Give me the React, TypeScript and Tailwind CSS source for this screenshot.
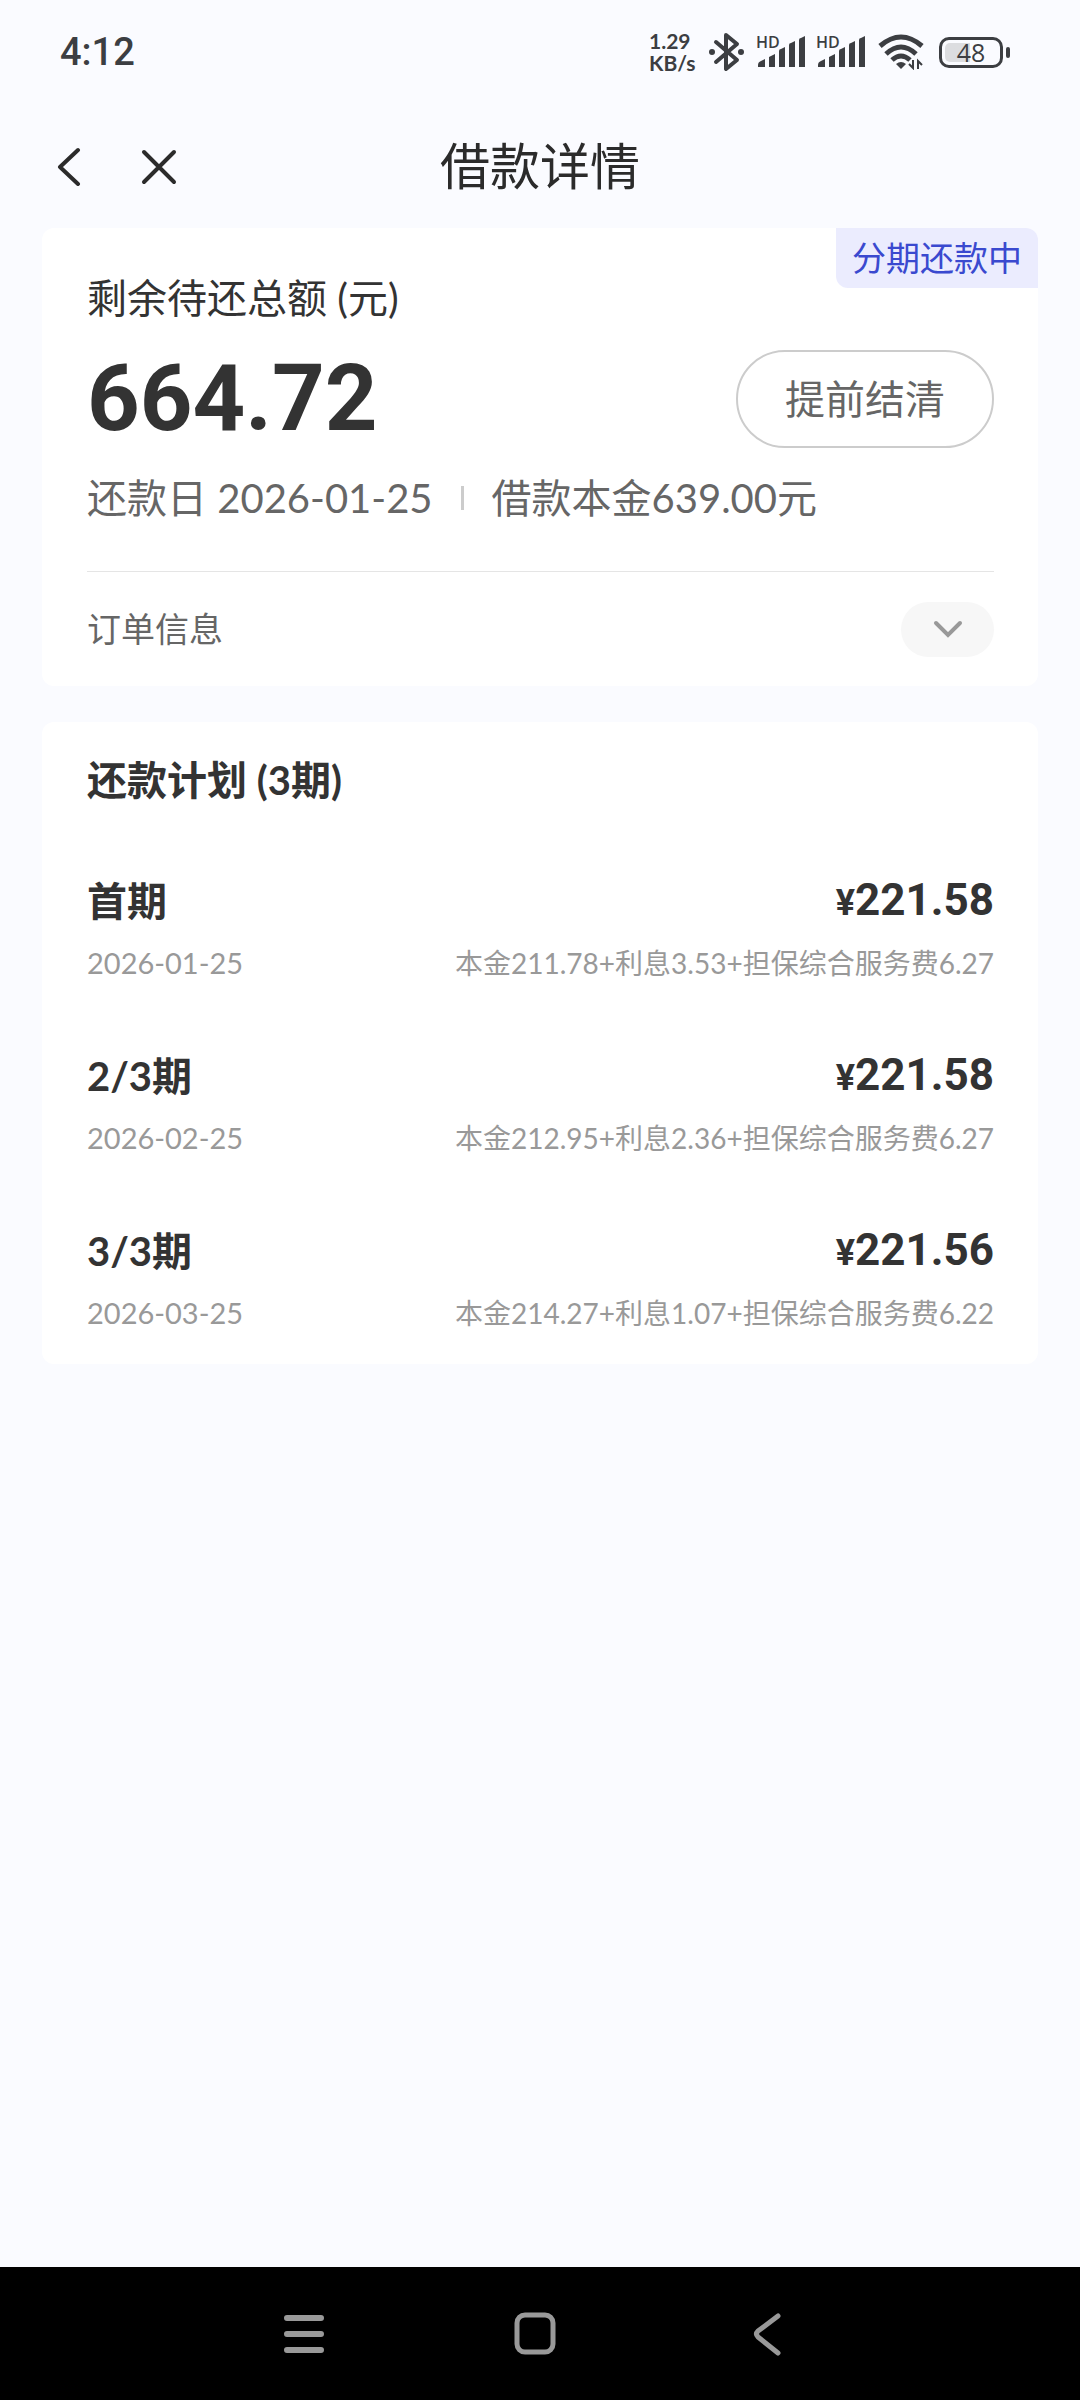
import { useState } from "react";

interface Installment {
  id: number;
  label: string;
  date: string;
  amount: string;
  detail: string;
}

const installments: Installment[] = [
  {
    id: 1,
    label: "首期",
    date: "2026-01-25",
    amount: "221.58",
    detail: "本金211.78+利息3.53+担保综合服务费6.27",
  },
  {
    id: 2,
    label: "2/3期",
    date: "2026-02-25",
    amount: "221.58",
    detail: "本金212.95+利息2.36+担保综合服务费6.27",
  },
  {
    id: 3,
    label: "3/3期",
    date: "2026-03-25",
    amount: "221.56",
    detail: "本金214.27+利息1.07+担保综合服务费6.22",
  },
];

function SignalIcon() {
  return (
    <div className="relative h-8 w-[50px]">
      <span className="absolute left-0 top-0 font-['Open_Sans',sans-serif] text-[16px] font-semibold leading-3">HD</span>
      <svg viewBox="0 0 50 32" className="h-8 w-[50px]" fill="currentColor" aria-hidden="true">
        <path d="M2 31v-2q0-3 3-4l4-2v8z" />
        <path d="M13 31V21l6-3v13z" />
        <path d="M23 31V15q0-2 2-2l4-2v20z" />
        <path d="M33 31V9q0-2 2-2l4-2v26z" />
        <path d="M43 31V4q0-2 2-2l4-2v31z" />
      </svg>
    </div>
  );
}

function StatusBar() {
  return (
    <div className="flex h-[104px] items-center justify-between pl-[60px] pr-[70px] text-[#3c3e42]">
      <span className="font-['Roboto',sans-serif] text-[38px] font-medium leading-none">4:12</span>
      <div className="flex items-center">
        <div className="w-[59px] text-[21px] font-bold leading-[22px]">
          <p>1.29</p>
          <p>KB/s</p>
        </div>
        <svg viewBox="0 0 38 40" className="mr-[10px] h-10 w-[38px]" fill="none" stroke="currentColor" strokeWidth="4" strokeLinejoin="round" aria-hidden="true">
          <path d="M8 10l21 18-11 9V3l11 9L8 30" strokeLinecap="round" />
          <circle cx="4" cy="20" r="3" fill="currentColor" stroke="none" />
          <circle cx="33" cy="20" r="3" fill="currentColor" stroke="none" />
        </svg>
        <div className="flex gap-[10px]">
          <SignalIcon />
          <SignalIcon />
        </div>
        <svg viewBox="0 0 46 36" className="ml-3 h-9 w-[46px]" fill="none" stroke="currentColor" strokeWidth="5" aria-hidden="true">
          <path d="M2 12Q23-6 44 12" />
          <path d="M8 20Q23 6 38 20" />
          <path d="M14 26Q23 18 32 26" />
          <path d="M18 30q5-4 10 0l-5 5z" fill="currentColor" stroke="none" />
          <path d="M35 26v8l-4-4M40 35v-8l4 4" strokeWidth="2" />
        </svg>
        <div className="ml-[15px] flex items-center gap-[3px]">
          <div className="flex h-[31px] w-16 items-center rounded-[10px] border-[3px] border-current p-[3px]">
            <div className="flex h-full w-full items-center justify-center rounded-[5px] bg-linear-to-r from-[#dcdde0] from-48% to-transparent to-48%">
              <span className="font-['Open_Sans',sans-serif] text-[25px] leading-none">48</span>
            </div>
          </div>
          <div className="h-[11px] w-1 rounded-sm bg-current" />
        </div>
      </div>
    </div>
  );
}

function Header() {
  return (
    <header className="grid h-[124px] grid-cols-[1fr_auto_1fr] items-center px-[56px]">
      <div className="flex items-center gap-[56px] text-[#2b2b2b]">
        <button type="button" aria-label="返回">
          <svg viewBox="0 0 28 40" className="h-10 w-7" fill="none" stroke="currentColor" strokeWidth="4" strokeLinecap="round" strokeLinejoin="round">
            <path d="M22 4L4 21l18 17" />
          </svg>
        </button>
        <button type="button" aria-label="关闭">
          <svg viewBox="0 0 38 40" className="h-10 w-[38px]" fill="none" stroke="currentColor" strokeWidth="4" strokeLinecap="round">
            <path d="M4 6l30 30M34 6L4 36" />
          </svg>
        </button>
      </div>
      <h1 className="text-[50px] leading-[56px] text-[#2b2b2b]">借款详情</h1>
    </header>
  );
}

function SummaryCard() {
  const [open, setOpen] = useState(false);

  return (
    <section className="relative rounded-xl bg-white pl-[45px] pr-[44px] pt-[42px]">
      <span className="absolute right-0 top-0 rounded-bl-xl rounded-tr-xl bg-[#ebecfe] px-4 text-[34px] leading-[60px] text-[#3a49cf]">
        分期还款中
      </span>
      <p className="h-14 text-[40px] leading-[56px] text-[#333]">剩余待还总额 (元)</p>
      <div className="mt-6 flex items-center justify-between">
        <p className="font-['Roboto',sans-serif] text-[92px] font-bold leading-[88px] text-[#333]">664.72</p>
        <button type="button" className="h-[98px] rounded-full border-2 border-[#ccc] px-[47px] text-[40px] leading-none text-[#666]">
          提前结清
        </button>
      </div>
      <div className="mt-[22px] flex h-14 items-center text-[40px] leading-[56px] text-[#666]">
        <span>还款日 2026-01-25</span>
        <span className="mx-7 h-6 w-[3px] bg-[#ccc]" />
        <span>借款本金639.00元</span>
      </div>
      <div className="mt-[45px] flex h-[115px] items-center justify-between border-t border-[#e5e5e5]">
        <span className="text-[34px] leading-[56px] text-[#666]">订单信息</span>
        <button
          type="button"
          aria-label="展开订单信息"
          aria-expanded={open}
          onClick={() => setOpen(!open)}
          className="flex h-[55px] w-[93px] items-center justify-center rounded-full bg-[#f7f7f7] text-[#999]"
        >
          <svg viewBox="0 0 30 20" className="h-5 w-[30px]" fill="none" stroke="currentColor" strokeWidth="4" strokeLinecap="round">
            <path d="M3 4l12 12L27 4" />
          </svg>
        </button>
      </div>
    </section>
  );
}

function PlanCard() {
  return (
    <section className="rounded-xl bg-white pb-[31px] pl-[45px] pr-[44px] pt-[30px]">
      <h2 className="h-14 text-[40px] font-bold leading-[56px] text-[#333]">还款计划 (3期)</h2>
      <ul className="mt-[65px] flex flex-col gap-[65px]">
        {installments.map((item) => (
          <li key={item.id} className="flex flex-col gap-[14px]">
            <div className="flex h-14 items-center justify-between font-bold leading-[56px] text-[#333]">
              <span className="text-[40px]">{item.label}</span>
              <span className="font-['Roboto',sans-serif] text-[44px] leading-[48px]">
                <span className="text-[36px]">¥</span>
                {item.amount}
              </span>
            </div>
            <div className="flex h-10 items-center justify-between leading-[40px] text-[#999]">
              <span className="text-[29px]">{item.date}</span>
              <span className="text-[28px]">{item.detail}</span>
            </div>
          </li>
        ))}
      </ul>
    </section>
  );
}

function NavBar() {
  return (
    <nav className="flex h-[133px] items-center justify-center gap-[184px] bg-black pr-2 text-[#999]">
      <button type="button" aria-label="最近任务">
        <svg viewBox="0 0 48 48" className="h-12 w-12" fill="none" stroke="currentColor" strokeWidth="6" strokeLinecap="round">
          <path d="M7 8h34M7 24h34M7 40h34" />
        </svg>
      </button>
      <button type="button" aria-label="主屏幕">
        <svg viewBox="0 0 48 48" className="h-12 w-12" fill="none" stroke="currentColor" strokeWidth="5">
          <rect x="5" y="5" width="36" height="37" rx="8" />
        </svg>
      </button>
      <button type="button" aria-label="返回上一页">
        <svg viewBox="0 0 48 48" className="h-12 w-12" fill="none" stroke="currentColor" strokeWidth="5" strokeLinecap="round" strokeLinejoin="round">
          <path d="M34 6L14 21q-3 3 0 6l20 16" />
        </svg>
      </button>
    </nav>
  );
}

export default function App() {
  return (
    <div className="flex min-h-screen flex-col bg-[#fafbff] font-['Lato','Noto_Sans_CJK_SC',sans-serif]">
      <StatusBar />
      <Header />
      <main className="flex flex-1 flex-col gap-9 px-[42px]">
        <SummaryCard />
        <PlanCard />
      </main>
      <NavBar />
    </div>
  );
}
